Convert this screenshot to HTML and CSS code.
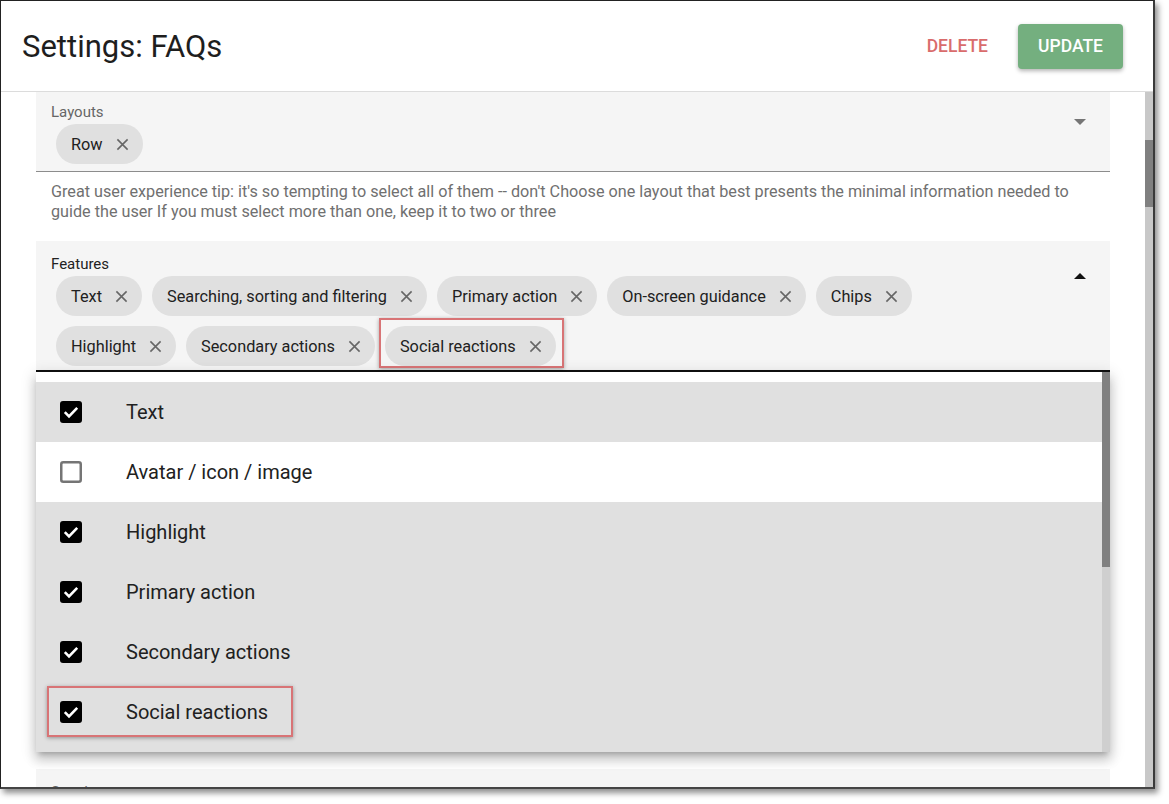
FILE: index.html
```html
<!DOCTYPE html>
<html lang="en">
<head>
    <meta charset="UTF-8">
    <meta name="viewport" content="width=device-width, initial-scale=1.0">
    <title>Settings: FAQs</title>
    <link rel="stylesheet" href="styles.css">
</head>
<body>
    <div class="window">
        <header class="header">
            <h1>Settings: FAQs</h1>
            <div class="actions">
                <button class="btn-delete">Delete</button>
                <button class="btn-update">Update</button>
            </div>
        </header>

        <div class="main">
            <div class="content">
                <div class="field field-layouts">
                    <div class="field-body">
                        <label class="field-label">Layouts</label>
                        <div class="chips">
                            <span class="chip">Row <svg class="chip-x" viewBox="0 0 14 14"><path d="M1.5 1.5l11 11M12.5 1.5l-11 11"/></svg></span>
                        </div>
                    </div>
                    <span class="select-icon"></span>
                </div>
                <p class="helper">Great user experience tip: it's so tempting to select all of them -- don't Choose one layout that best presents the minimal information needed to guide the user If you must select more than one, keep it to two or three</p>

                <div class="field field-features">
                    <div class="field-body">
                        <label class="field-label">Features</label>
                        <div class="chips">
                            <span class="chip">Text <svg class="chip-x" viewBox="0 0 14 14"><path d="M1.5 1.5l11 11M12.5 1.5l-11 11"/></svg></span>
                            <span class="chip">Searching, sorting and filtering <svg class="chip-x" viewBox="0 0 14 14"><path d="M1.5 1.5l11 11M12.5 1.5l-11 11"/></svg></span>
                            <span class="chip">Primary action <svg class="chip-x" viewBox="0 0 14 14"><path d="M1.5 1.5l11 11M12.5 1.5l-11 11"/></svg></span>
                            <span class="chip">On-screen guidance <svg class="chip-x" viewBox="0 0 14 14"><path d="M1.5 1.5l11 11M12.5 1.5l-11 11"/></svg></span>
                            <span class="chip">Chips <svg class="chip-x" viewBox="0 0 14 14"><path d="M1.5 1.5l11 11M12.5 1.5l-11 11"/></svg></span>
                            <span class="chip">Highlight <svg class="chip-x" viewBox="0 0 14 14"><path d="M1.5 1.5l11 11M12.5 1.5l-11 11"/></svg></span>
                            <span class="chip">Secondary actions <svg class="chip-x" viewBox="0 0 14 14"><path d="M1.5 1.5l11 11M12.5 1.5l-11 11"/></svg></span>
                            <span class="chip callout">Social reactions <svg class="chip-x" viewBox="0 0 14 14"><path d="M1.5 1.5l11 11M12.5 1.5l-11 11"/></svg></span>
                        </div>
                    </div>
                    <span class="select-icon open"></span>
                </div>

                <div class="field field-next">
                    <div class="field-body">
                        <label class="field-label">Spacing</label>
                    </div>
                </div>

                <!-- open dropdown for Features -->
                <div class="menu">
                    <ul class="menu-list">
                        <li class="menu-item selected">
                            <svg class="checkbox" viewBox="0 0 22 22"><rect class="box-on" width="22" height="22" rx="3"/><path class="tick" d="M4.8 11.2l4.2 4.2 8.2-8.6"/></svg>
                            Text
                        </li>
                        <li class="menu-item">
                            <svg class="checkbox" viewBox="0 0 22 22"><rect class="box-off" x="1.25" y="1.25" width="19.5" height="19.5" rx="2"/></svg>
                            Avatar / icon / image
                        </li>
                        <li class="menu-item selected">
                            <svg class="checkbox" viewBox="0 0 22 22"><rect class="box-on" width="22" height="22" rx="3"/><path class="tick" d="M4.8 11.2l4.2 4.2 8.2-8.6"/></svg>
                            Highlight
                        </li>
                        <li class="menu-item selected">
                            <svg class="checkbox" viewBox="0 0 22 22"><rect class="box-on" width="22" height="22" rx="3"/><path class="tick" d="M4.8 11.2l4.2 4.2 8.2-8.6"/></svg>
                            Primary action
                        </li>
                        <li class="menu-item selected">
                            <svg class="checkbox" viewBox="0 0 22 22"><rect class="box-on" width="22" height="22" rx="3"/><path class="tick" d="M4.8 11.2l4.2 4.2 8.2-8.6"/></svg>
                            Secondary actions
                        </li>
                        <li class="menu-item selected callout">
                            <svg class="checkbox" viewBox="0 0 22 22"><rect class="box-on" width="22" height="22" rx="3"/><path class="tick" d="M4.8 11.2l4.2 4.2 8.2-8.6"/></svg>
                            Social reactions
                        </li>
                    </ul>
                    <div class="menu-scrollbar"><div class="menu-thumb"></div></div>
                </div>
            </div>
            <div class="scrollbar"><div class="thumb"></div></div>
        </div>
    </div>
</body>
</html>
```

FILE: styles.css
```css
html, body {
    margin: 0;
    padding: 0;
}

*, *::before, *::after {
    box-sizing: border-box;
}

body {
    width: 1169px;
    height: 804px;
    overflow: hidden;
    background: #fff;
    font-family: Roboto, "Noto Sans", "Liberation Sans", sans-serif;
    color: #212121;
}

.window {
    width: 1155px;
    height: 789px;
    display: flex;
    flex-direction: column;
    overflow: hidden;
    background: #fff;
    border-left: 1px solid #222;
    border-top: 1px solid #222;
    border-right: 2px solid #3a3a3a;
    border-bottom: 2px solid #444;
    box-shadow: 3px 4px 6px rgba(0, 0, 0, 0.45);
}

/* header */
.header {
    flex: none;
    height: 91px;
    display: flex;
    align-items: center;
    justify-content: space-between;
    padding: 0 30px 0 21px;
    border-bottom: 1px solid #dcdcdc;
}

.header h1 {
    margin: 0;
    font-size: 31px;
    font-weight: 400;
    color: #1e1e1e;
}

.actions {
    display: flex;
    align-items: center;
    gap: 30px;
}

.btn-delete,
.btn-update {
    font-family: inherit;
    font-size: 17.5px;
    font-weight: 500;
    text-transform: uppercase;
    border: none;
    cursor: pointer;
}

.btn-delete {
    background: none;
    padding: 0;
    color: #d96c6c;
}

.btn-update {
    width: 105px;
    height: 45px;
    padding: 0;
    border-radius: 4px;
    background: #74af7f;
    color: #fff;
    box-shadow: 0 2px 4px rgba(0, 0, 0, 0.3);
}

/* scroll area */
.main {
    flex: 1;
    min-height: 0;
    display: flex;
}

.content {
    flex: 1;
    position: relative;
    overflow: hidden;
    padding: 0 35px;
}

.scrollbar {
    flex: none;
    width: 8px;
    background: #c8c8c8;
}

.thumb {
    height: 67px;
    margin-top: 48px;
    background: #808080;
}

/* select fields */
.field {
    display: flex;
    background: #f5f5f5;
    padding: 12px 18px 7px 15px;
    border-bottom: 1px solid #8c8c8c;
}

.field-body {
    flex: 1;
    min-width: 0;
}

.field-label {
    display: block;
    font-size: 15px;
    line-height: 16px;
    color: #666;
}

.chips {
    display: flex;
    flex-wrap: wrap;
    gap: 10px;
    margin: 4px 0 0 5px;
}

.chip {
    position: relative;
    display: inline-flex;
    align-items: center;
    gap: 13px;
    height: 40px;
    padding: 0 14px 0 15px;
    border-radius: 20px;
    background: #e0e0e0;
    font-size: 16.3px;
    color: #212121;
    white-space: nowrap;
}

.chip-x {
    width: 13px;
    height: 13px;
    fill: none;
    stroke: #666;
    stroke-width: 1.7;
}

.select-icon {
    flex: none;
    position: relative;
    width: 24px;
    height: 24px;
    margin: 6px 0 0 40px;
}

.select-icon::before {
    content: "";
    position: absolute;
    left: 6px;
    top: 9px;
    border-left: 6px solid transparent;
    border-right: 6px solid transparent;
    border-top: 6px solid #757575;
}

.select-icon.open {
    margin-top: 8px;
}

.select-icon.open::before {
    border-top: none;
    border-bottom: 6px solid #111;
}

.helper {
    margin: 10px 14px 19px 15px;
    font-size: 16.2px;
    line-height: 20px;
    color: #707070;
}

.field-features {
    padding-top: 15px;
    padding-bottom: 4px;
    border-bottom: 2px solid #111;
}

.field-features .field-label {
    color: #222;
}

.field-next {
    margin-top: 397px;
    padding-top: 15px;
    height: 60px;
}

/* annotation boxes */
.callout::after {
    content: "";
    position: absolute;
    border: 2px solid #d87476;
    box-shadow: 0 1px 4px rgba(0, 0, 0, 0.35);
    pointer-events: none;
}

.chip.callout::after {
    left: -6px;
    top: -8px;
    width: 185px;
    height: 50px;
}

.menu-item.callout::after {
    left: 11px;
    top: 4px;
    width: 246px;
    height: 51px;
}

/* dropdown menu */
.menu {
    position: absolute;
    top: 280px;
    left: 35px;
    width: 1074px;
    height: 380px;
    display: flex;
    overflow: hidden;
    background: #fff;
    box-shadow: 0 5px 5px -3px rgba(0, 0, 0, 0.2), 0 8px 10px 1px rgba(0, 0, 0, 0.14), 0 3px 14px 2px rgba(0, 0, 0, 0.12);
}

.menu-list {
    flex: 1;
    margin: 0;
    padding: 0;
    list-style: none;
    border-top: 10px solid #fff;
    background: #e0e0e0;
}

.menu-item {
    position: relative;
    height: 60px;
    display: flex;
    align-items: center;
    padding-left: 24px;
    font-size: 20px;
    color: #212121;
    background: #fff;
}

.menu-item.selected {
    background: #e0e0e0;
}

.checkbox {
    flex: none;
    width: 22px;
    height: 22px;
    margin-right: 44px;
}

.box-on {
    fill: #000;
}

.box-off {
    fill: none;
    stroke: #757575;
    stroke-width: 2.5;
}

.tick {
    fill: none;
    stroke: #fff;
    stroke-width: 2.6;
}

.menu-scrollbar {
    flex: none;
    width: 8px;
    background: #cfcfcf;
}

.menu-thumb {
    height: 195px;
    background: #808080;
}
```
